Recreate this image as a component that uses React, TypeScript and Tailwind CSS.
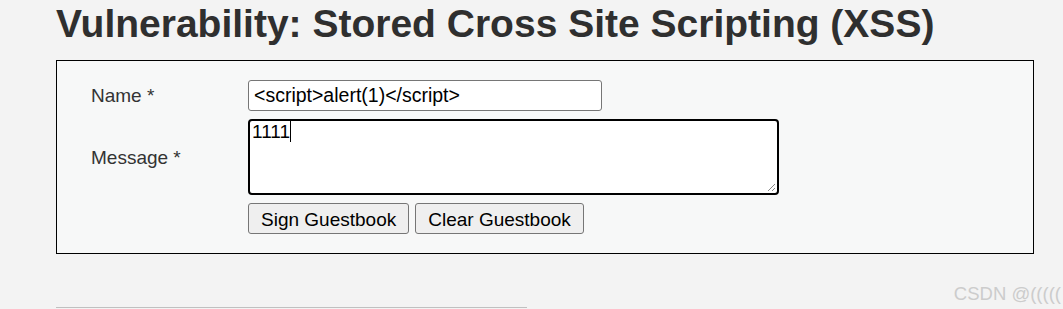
import React from 'react';

const font = { fontFamily: '"Liberation Sans", Arial, sans-serif' };

const GuestbookForm: React.FC = () => {
  return (
    <div className="border border-black bg-[#f7f8f8] pl-[34px] pr-4 pt-[19px] pb-[19px]">
      <div className="grid grid-cols-[157px_auto] gap-y-2 items-center">
        {/* Name */}
        <label className="pt-[2px] text-[19px] text-[#333]">Name *</label>
        <div className="h-[31px] w-[354px] flex items-center rounded-[3px] border border-[#767676] bg-white px-[5px] pt-[1px] text-[19.5px] text-black">
          &lt;script&gt;alert(1)&lt;/script&gt;
        </div>

        {/* Message */}
        <label className="pt-[2px] text-[19px] text-[#333]">Message *</label>
        <div className="relative h-[76px] w-[531px] rounded-[4px] border-2 border-black bg-white px-[2px] text-[19px] leading-[22px] text-black">
          <span>1111</span>
          <span className="inline-block h-[21px] w-px bg-black align-[-4px]" />
          {/* resize grip */}
          <svg className="absolute bottom-[1px] right-[1px]" width="10" height="10" viewBox="0 0 10 10">
            <path d="M9 2 L2 9 M9 6 L6 9" stroke="#888" strokeWidth="1" />
          </svg>
        </div>

        {/* Actions */}
        <div />
        <div className="flex gap-[6px]">
          <button className="h-[31px] rounded-[3px] border border-[#767676] bg-[#efefef] px-[12px] pt-[2px] text-[19px] text-black">
            Sign Guestbook
          </button>
          <button className="h-[31px] rounded-[3px] border border-[#767676] bg-[#efefef] px-[12px] pt-[2px] text-[19px] text-black">
            Clear Guestbook
          </button>
        </div>
      </div>
    </div>
  );
};

const App: React.FC = () => {
  return (
    <div className="relative h-[309px] w-[1063px] overflow-hidden bg-[#f3f3f3]" style={font}>
      <div className="pl-[56px] pr-[29px]">
        <h1 className="pt-[1px] text-[39px] font-bold leading-[45px] text-[#2f2f2f]">
          Vulnerability: Stored Cross Site Scripting (XSS)
        </h1>
        <div className="mt-[14px]">
          <GuestbookForm />
        </div>
        <div className="mt-[53px] h-px w-[471px] bg-[#c0c0c0]" />
      </div>

      {/* watermark */}
      <div className="absolute right-[2px] top-[280px] text-[18.5px] text-[#cccccc]">CSDN @(((((</div>
    </div>
  );
};

export default App;
